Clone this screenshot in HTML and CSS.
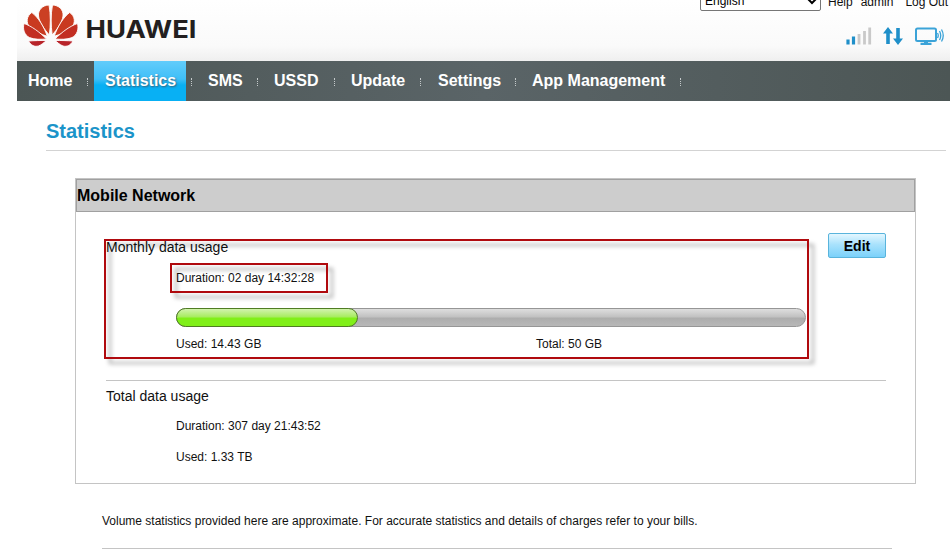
FILE: index.html
```html
<!DOCTYPE html>
<html lang="en">
  <head>
    <meta charset="UTF-8" />
    <meta name="viewport" content="width=device-width, initial-scale=1.0" />
    <title>Statistics</title>
    <link rel="stylesheet" href="styles.css">
  </head>
  <body>
    <div class="header">
      <div class="logo">
        <svg width="180" height="44" viewBox="0 0 180 44">
          <g id="half" stroke="#ffffff" stroke-width="0.900">
            <path fill="#cb4023" d="M26.300 31C27.600 22 27.800 10 26 1C19.500 1.200 14.800 6 15.500 12C16.200 18 21.500 25.500 26.300 31Z" />
            <path fill="#c93a20" d="M24.300 32.300C21 23 15.500 13.500 8.800 8.500C3.500 12 2.800 18.500 6.500 23C11 27.500 18.500 30.500 24.300 32.300Z" />
            <path fill="#c22e22" d="M23.500 35C16.500 28 8.500 22 1 19.500C-0.500 25.500 1.500 31 6.500 33.600C11.500 35.700 18 35.400 23.500 35Z" />
            <path fill="#b8242a" d="M23.300 36.500C18 36.400 11 36.600 5.500 37C8 41.500 11.500 43 15.500 42C18.500 40.800 21 38.700 23.300 36.500Z" />
          </g>
          <use href="#half" transform="translate(55.500 0) scale(-1 1)" />
          <text class="logo-text" x="62.500" y="33.500" textLength="111" lengthAdjust="spacingAndGlyphs">HUAWEI</text>
        </svg>
      </div>
      <div class="tools">
        <div class="links">
          <select>
            <option>English</option>
          </select>
          <a class="help">Help</a>
          <a class="user">admin</a>
          <a class="logout">Log Out</a>
        </div>
        <div class="status">
          <svg width="26" height="18" viewBox="0 0 26 18">
            <path d="M2 12.500V17.500M7.500 9.500V17.500" stroke="#1f8fc9" stroke-width="3.200" />
            <path d="M13 7V17.500M18.500 4V17.500M23.700 0.500V17.500" stroke="#c9c9c9" stroke-width="2.800" />
          </svg>
          <svg class="arrows" width="20" height="18" viewBox="0 0 20 18">
            <path fill="#1f8fc9" d="M5 0L10 6.500H6.800V17H3.200V6.500H0ZM15 18L10 11.500H13.200V1H16.800V11.500H20Z" />
          </svg>
          <svg class="screen" width="29" height="19" viewBox="0 0 29 19" fill="none" stroke="#3ba3d8">
            <rect x="1" y="1.500" width="20" height="12.500" rx="1.500" stroke-width="2" />
            <path d="M5.500 16.800H16.500M9 15.500H13" stroke-width="2.200" />
            <path d="M22.500 6Q24 8.500 22.500 11M24.500 4Q27 8.500 24.500 13M26.500 2.500Q30 8.500 26.500 14.500" stroke-width="1.300" />
          </svg>
        </div>
      </div>
    </div>

    <div class="nav">
      <a class="home">Home</a>
      <a class="active">Statistics</a>
      <a class="sms">SMS</a>
      <a class="ussd">USSD</a>
      <a class="update">Update</a>
      <a class="settings">Settings</a>
      <a class="apps">App Management</a>
    </div>

    <div class="content">
      <h1>Statistics</h1>
      <div class="panel">
        <h2>Mobile Network</h2>
        <div class="panel-body">
          <div class="section monthly">
            <div class="section-title">Monthly data usage</div>
            <div class="duration">Duration: 02 day 14:32:28</div>
            <div class="progress">
              <div class="progress-bar" style="width: 182px"></div>
            </div>
            <div class="amounts">
              <span>Used: 14.43 GB</span>
              <span>Total: 50 GB</span>
            </div>
            <button class="edit-button">Edit</button>
            <div class="mark mark-usage"></div>
            <div class="mark mark-duration"></div>
          </div>
          <div class="section total">
            <div class="section-title">Total data usage</div>
            <div class="duration">Duration: 307 day 21:43:52</div>
            <div class="used">Used: 1.33 TB</div>
          </div>
        </div>
      </div>
      <p class="note">
        Volume statistics provided here are approximate. For accurate statistics and details of charges refer to your bills.
      </p>
    </div>
  </body>
</html>
```
FILE: styles.css
```css
body {
  margin: 0;
  height: 551px;
  overflow: hidden;
  background-color: #ffffff;
  color: #111111;
  font-family: "Liberation Sans", Arial, sans-serif;
  font-size: 12px;
}
.header {
  display: flex;
  justify-content: space-between;
  height: 61px;
  margin-left: 17px;
  background: linear-gradient(#ffffff, #fafafa 75%, #efefef);
}
.logo {
  padding: 4px 0 0 6px;
}
.logo-text {
  fill: #231f20;
  font-family: Inter, sans-serif;
  font-size: 24.5px;
  font-weight: 700;
}
.tools {
  width: 250px;
}
.links {
  display: flex;
  height: 22px;
  margin-top: -9px;
  line-height: 22px;
  white-space: nowrap;
}
.links select {
  box-sizing: border-box;
  width: 121px;
  height: 20px;
  padding: 0;
  border: 1px solid #767676;
  border-radius: 2px;
  background-color: #ffffff;
  font-family: "Liberation Sans", Arial, sans-serif;
  font-size: 12px;
}
.help {
  margin-left: 7px;
}
.user {
  margin-left: 8px;
}
.logout {
  margin-left: 12px;
}
.status {
  display: flex;
  padding: 14px 0 0 146px;
}
.arrows {
  margin-left: 11px;
}
.screen {
  margin-left: 12px;
}
.nav {
  display: flex;
  height: 40px;
  margin-left: 17px;
  background: linear-gradient(90deg, #4c5655, #5a6467 50%, #4c5655);
}
.nav a {
  box-sizing: border-box;
  position: relative;
  padding-left: 22px;
  color: #ffffff;
  font-size: 16px;
  font-weight: bold;
  line-height: 39px;
  white-space: nowrap;
}
/* dotted separator after each menu item */
.nav a::after {
  content: "";
  position: absolute;
  top: 17px;
  right: 0;
  height: 8px;
  border-left: 1px dotted #c5cacb;
}
.nav .home {
  width: 71px;
  margin-right: 6px;
  padding-left: 11px;
}
.nav .active {
  width: 92px;
  padding-left: 11px;
  background: linear-gradient(#62ccfb, #3fbff8 45%, #08b0f4 60%, #08b0f4);
  text-shadow: 1px 1px 2px #35627a;
}
.nav .active::after {
  right: -6px;
}
.nav .sms {
  width: 72px;
}
.nav .ussd {
  width: 77px;
  padding-left: 16px;
}
.nav .update {
  width: 86px;
  padding-left: 16px;
}
.nav .settings {
  width: 95px;
  padding-left: 17px;
}
.nav .apps {
  width: 165px;
  padding-left: 16px;
}
.content {
  padding: 17px 4px 0 46px;
}
h1 {
  height: 32px;
  margin: 0;
  border-bottom: 1px solid #d3d3d3;
  color: #1b94c9;
  font-size: 20px;
  line-height: 26px;
}
.panel {
  box-sizing: border-box;
  width: 841px;
  height: 306px;
  margin: 27px 0 0 29px;
  border: 1px solid #c4c4c4;
}
h2 {
  height: 31px;
  margin: 0;
  border: 1px solid #a0a0a0;
  background-color: #cdcdcd;
  color: #000000;
  font-size: 16px;
  line-height: 31px;
}
.panel-body {
  padding: 26px 29px 0 30px;
}
.section {
  position: relative;
}
.section-title {
  font-size: 14px;
  line-height: 18px;
}
.monthly {
  height: 142px;
  border-bottom: 1px solid #c4c4c4;
}
.duration {
  margin: 14px 0 0 70px;
  line-height: 16px;
}
.progress {
  box-sizing: border-box;
  width: 630px;
  height: 19px;
  margin: 22px 0 0 70px;
  border: 1px solid #969696;
  border-radius: 10px;
  background: linear-gradient(#dedede, #c2c2c2 45%, #adadad 55%, #b8b8b8);
}
.progress-bar {
  box-sizing: border-box;
  height: 19px;
  margin: -1px 0 0 -1px;
  border: 1px solid #4f7c23;
  border-radius: 10px;
  background: linear-gradient(#d2f3ae, #a8ec62 45%, #80ef18 55%, #80ef18);
}
.amounts {
  display: flex;
  margin: 9px 0 0 70px;
  line-height: 16px;
}
.amounts span {
  flex: 0 0 360px;
}
.amounts span:last-child {
  flex-basis: auto;
}
.edit-button {
  position: absolute;
  top: -5px;
  right: 0;
  width: 58px;
  height: 25px;
  padding: 0;
  border: 1px solid #59b4dc;
  border-radius: 2px;
  background: linear-gradient(#e4f7ff, #a9e2fc 45%, #7bd1fa);
  color: #000000;
  font-family: "Liberation Sans", Arial, sans-serif;
  font-size: 14px;
  font-weight: bold;
}
/* highlighted areas */
.mark {
  box-sizing: border-box;
  position: absolute;
  border: 2px solid #b00a0e;
  filter: drop-shadow(5px 5px 2px rgba(0, 0, 0, 0.35));
}
.mark-usage {
  top: 1px;
  left: -2px;
  width: 705px;
  height: 120px;
}
.mark-duration {
  top: 25px;
  left: 64px;
  width: 158px;
  height: 30px;
}
.total {
  padding-top: 6px;
}
.total .duration {
  margin-top: 13px;
}
.used {
  margin: 15px 0 0 70px;
  line-height: 16px;
}
.note {
  width: 790px;
  height: 35px;
  margin: 29px 0 0 56px;
  border-bottom: 1px solid #c4c4c4;
  line-height: 16px;
  white-space: nowrap;
}
```
